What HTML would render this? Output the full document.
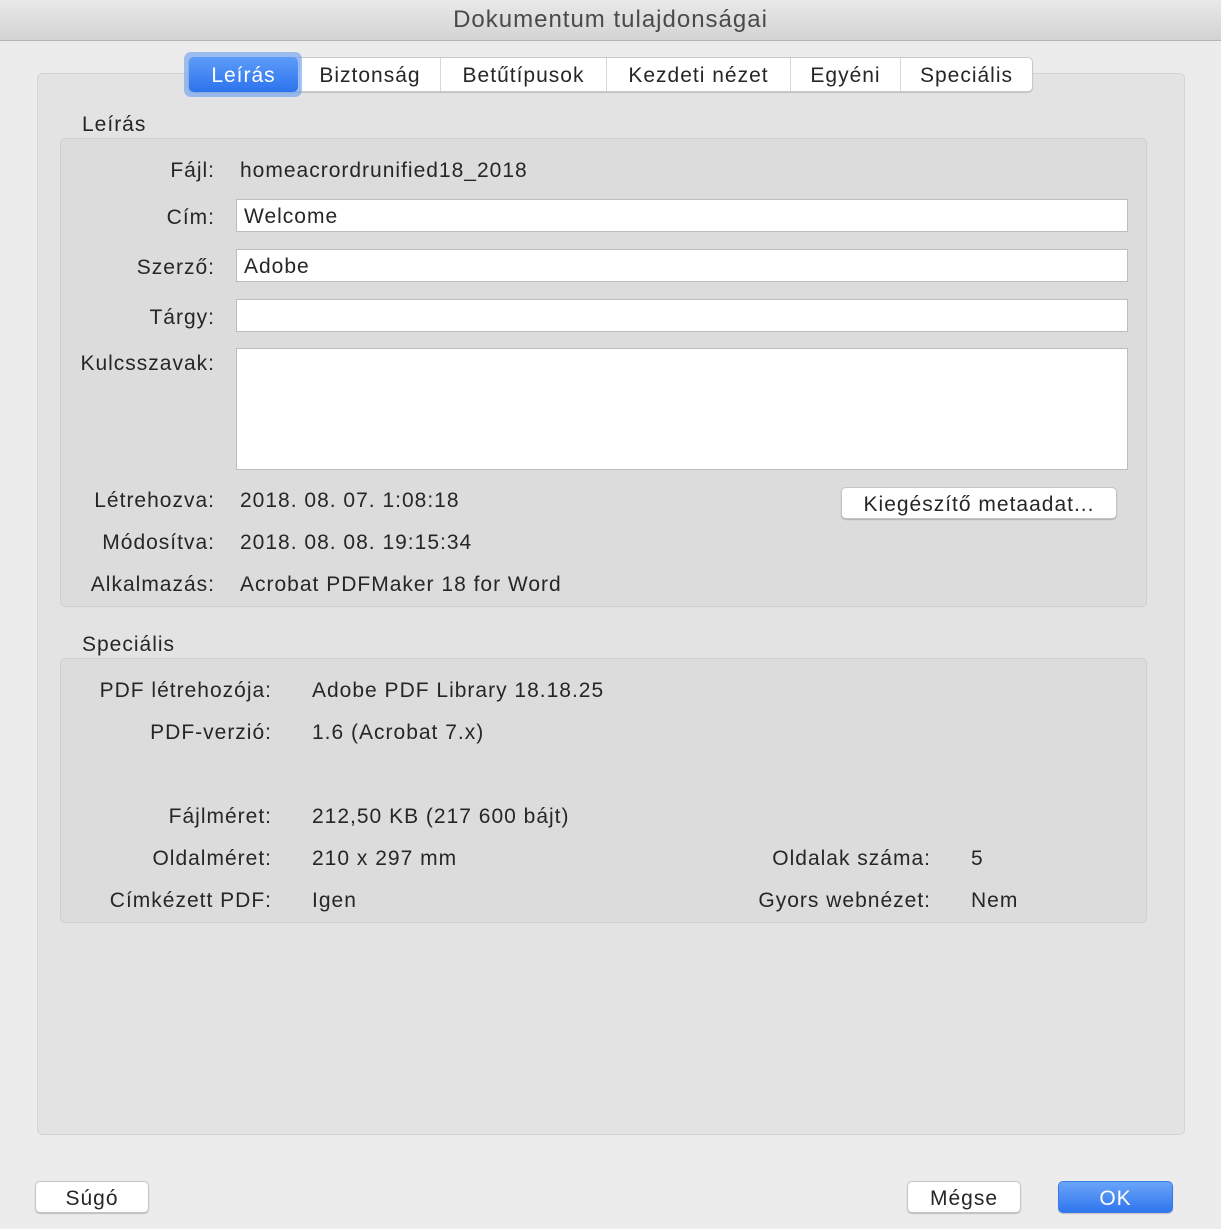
<!DOCTYPE html>
<html><head><meta charset="utf-8"><style>
*{box-sizing:border-box;margin:0;padding:0}
body{width:1221px;height:1229px;background:#ececec;font-family:"Liberation Sans",Arial,sans-serif;color:#262626;position:relative;overflow:hidden;font-size:21px;letter-spacing:1px}
.a{position:absolute}
.t{position:absolute;line-height:24px;height:24px;white-space:nowrap;margin-top:2px}
.r{text-align:right}
.title{left:0;top:0;width:1221px;height:41px;background:linear-gradient(#e9e9e9,#d3d3d3);border-bottom:1px solid #b5b5b5;text-align:center;line-height:40px;font-size:24px;color:#4a4a4a}
.box{background:#e3e3e3;border:1px solid #d4d4d4;border-radius:5px}
.grp{background:#dcdcdc;border:1px solid #d0d0d0;border-radius:5px}
.inp{background:#fff;border:1px solid #bdbdbd;padding-left:7px;line-height:34px}
.tabs{left:188px;top:57px;height:35px;display:flex;background:#fff;border:1px solid #c8c8c8;border-radius:5px;box-shadow:0 1px 1px rgba(0,0,0,.15)}
.tab{height:33px;line-height:36px;text-align:center;border-left:1px solid #d6d6d6;color:#262626}
.btn{background:#fff;border:1px solid #c4c4c4;border-radius:5px;box-shadow:0 1px 1px rgba(0,0,0,.2);text-align:center;line-height:33px}
</style></head><body>
<div class="a title">Dokumentum tulajdonságai</div>
<div class="a box" style="left:37px;top:73px;width:1148px;height:1062px"></div>
<div class="a tabs">
<div class="tab" style="width:110px;border-left:none"></div>
<div class="tab" style="width:141px">Biztonság</div>
<div class="tab" style="width:166px">Betűtípusok</div>
<div class="tab" style="width:184px">Kezdeti nézet</div>
<div class="tab" style="width:110px">Egyéni</div>
<div class="tab" style="width:132px">Speciális</div>
</div>
<div class="a" style="left:184px;top:52px;width:118px;height:45px;border-radius:7px;background:rgba(90,150,240,.55)"></div>
<div class="a" style="left:189px;top:57px;width:109px;height:35px;border-radius:5px;background:linear-gradient(#5d9cf8,#2c73ee);color:#fff;text-align:center;line-height:37px">Leírás</div>

<div class="t" style="left:82px;top:111px">Leírás</div>
<div class="a grp" style="left:60px;top:138px;width:1087px;height:469px"></div>
<div class="t r" style="left:0;width:215px;top:157px">Fájl:</div>
<div class="t" style="left:240px;top:157px">homeacrordrunified18_2018</div>
<div class="t r" style="left:0;width:215px;top:204px">Cím:</div>
<div class="a inp" style="left:236px;top:199px;width:892px;height:33px">Welcome</div>
<div class="t r" style="left:0;width:215px;top:254px">Szerző:</div>
<div class="a inp" style="left:236px;top:249px;width:892px;height:33px">Adobe</div>
<div class="t r" style="left:0;width:215px;top:304px">Tárgy:</div>
<div class="a inp" style="left:236px;top:299px;width:892px;height:33px"></div>
<div class="t r" style="left:0;width:215px;top:350px">Kulcsszavak:</div>
<div class="a inp" style="left:236px;top:348px;width:892px;height:122px"></div>
<div class="t r" style="left:0;width:215px;top:487px">Létrehozva:</div>
<div class="t" style="left:240px;top:487px">2018. 08. 07. 1:08:18</div>
<div class="a btn" style="left:841px;top:487px;width:276px;height:32px">Kiegészítő metaadat...</div>
<div class="t r" style="left:0;width:215px;top:529px">Módosítva:</div>
<div class="t" style="left:240px;top:529px">2018. 08. 08. 19:15:34</div>
<div class="t r" style="left:0;width:215px;top:571px">Alkalmazás:</div>
<div class="t" style="left:240px;top:571px">Acrobat PDFMaker 18 for Word</div>

<div class="t" style="left:82px;top:631px">Speciális</div>
<div class="a grp" style="left:60px;top:658px;width:1087px;height:265px"></div>
<div class="t r" style="left:0;width:272px;top:677px">PDF létrehozója:</div>
<div class="t" style="left:312px;top:677px">Adobe PDF Library 18.18.25</div>
<div class="t r" style="left:0;width:272px;top:719px">PDF-verzió:</div>
<div class="t" style="left:312px;top:719px">1.6 (Acrobat 7.x)</div>
<div class="t r" style="left:0;width:272px;top:803px">Fájlméret:</div>
<div class="t" style="left:312px;top:803px">212,50 KB (217 600 bájt)</div>
<div class="t r" style="left:0;width:272px;top:845px">Oldalméret:</div>
<div class="t" style="left:312px;top:845px">210 x 297 mm</div>
<div class="t r" style="left:0;width:272px;top:887px">Címkézett PDF:</div>
<div class="t" style="left:312px;top:887px">Igen</div>
<div class="t r" style="left:600px;width:331px;top:845px">Oldalak száma:</div>
<div class="t" style="left:971px;top:845px">5</div>
<div class="t r" style="left:600px;width:331px;top:887px">Gyors webnézet:</div>
<div class="t" style="left:971px;top:887px">Nem</div>

<div class="a btn" style="left:35px;top:1181px;width:114px;height:32px">Súgó</div>
<div class="a btn" style="left:907px;top:1181px;width:114px;height:32px">Mégse</div>
<div class="a btn" style="left:1058px;top:1181px;width:115px;height:32px;background:linear-gradient(#6aa5f9,#2f76ee);border-color:#3a7de8;color:#fff">OK</div>
</body></html>
